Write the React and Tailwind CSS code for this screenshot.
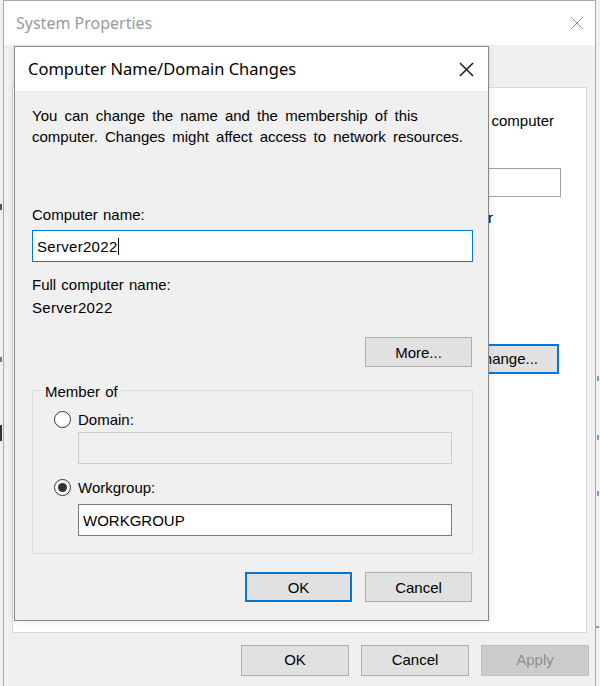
import React from "react";

const XIcon = ({ size, color, stroke }) => (
  <svg width={size} height={size} viewBox="0 0 16 16" fill="none">
    <path d="M1 1L15 15M15 1L1 15" stroke={color} strokeWidth={stroke} />
  </svg>
);

const Button = ({ children, def, disabled, w = "w-[107px]", h = "h-[30px]" }) => (
  <div
    className={`${w} ${h} flex items-center justify-center text-[15px] ${
      def
        ? "border-2 border-[#0078d7] bg-[#e1e1e1] text-black"
        : disabled
        ? "border border-[#bfbfbf] bg-[#cccccc] text-[#8f8f8f]"
        : "border border-[#adadad] bg-[#e1e1e1] text-black"
    }`}
  >
    {children}
  </div>
);

const Radio = ({ checked }) => (
  <div className="w-[17px] h-[17px] rounded-full border border-[#333333] bg-white flex items-center justify-center shrink-0">
    {checked && <div className="w-[9px] h-[9px] rounded-full bg-[#333333]" />}
  </div>
);

export default function App() {
  return (
    <div className="w-[600px] h-[686px] overflow-hidden flex bg-[#f0f0f0] font-['Liberation_Sans',Arial,sans-serif] text-black [word-spacing:1px]">
      {/* left background strip */}
      <div className="w-[3px] h-full flex flex-col bg-[#f0f0f0] overflow-hidden">
        <div className="h-[204px]" />
        <div className="h-[6px] w-[2px] bg-[#555]" />
        <div className="h-[147px]" />
        <div className="h-[5px] w-[2px] bg-[#777]" />
        <div className="h-[63px]" />
        <div className="h-[16px] w-[2px] bg-[#333]" />
      </div>

      {/* outer window */}
      <div className="relative w-[593px] h-full border-l border-r border-t border-[#a8a8a8] flex flex-col bg-[#f0f0f0]">
        <div className="h-[44px] bg-white flex items-center justify-between pl-[12px] pr-[11px]">
          <span className="text-[16px] text-[#9a9a9a] font-['Noto_Sans',sans-serif] [word-spacing:0px]">System Properties</span>
          <XIcon size={14} color="#8f8f8f" stroke={1.1} />
        </div>

        {/* tab panel */}
        <div className="ml-[8px] mt-[42px] w-[575px] h-[546px] border border-[#d9d9d9] bg-white flex flex-col items-end overflow-hidden text-[15px]">
          <div className="pt-[22px] pr-[32px] leading-[21px] whitespace-nowrap">
            your computer
          </div>
          <div className="mt-[37px] mr-[25px] w-[320px] h-[29px] border border-[#a0a0a0] bg-white" />
          <div className="mt-[10px] pr-[93px] leading-[21px] whitespace-nowrap">
            Server
          </div>
          <div className="mt-[116px] mr-[27px] w-[107px] h-[30px] border-2 border-[#0078d7] bg-[#e1e1e1] flex items-center justify-center text-[15px]">
            Change...
          </div>
        </div>

        {/* bottom buttons */}
        <div className="mt-[12px] flex justify-end gap-[12px] pr-[6px]">
          <Button w="w-[108px]" h="h-[31px]">OK</Button>
          <Button w="w-[108px]" h="h-[31px]">Cancel</Button>
          <Button w="w-[108px]" h="h-[31px]" disabled>Apply</Button>
        </div>

        {/* dialog overlay */}
        <div className="absolute left-[10px] top-[45px] w-[475px] h-[575px] border border-[#888888] bg-[#f0f0f0] flex flex-col shadow-[0_0_6px_rgba(0,0,0,0.12)]">
          <div className="h-[44px] bg-white flex items-center justify-between pl-[13px] pr-[14px]">
            <span className="text-[16.5px] font-['Noto_Sans',sans-serif] [word-spacing:0px]">Computer Name/Domain Changes</span>
            <XIcon size={15} color="#1a1a1a" stroke={1.6} />
          </div>

          <div className="flex flex-col pl-[17px] pr-[15px] pt-[14px] text-[15px] leading-[21px]">
            <p className="[word-spacing:3px]">
              You can change the name and the membership of this
              <br />
              computer. Changes might affect access to network resources.
            </p>

            <div className="mt-[57px]">Computer name:</div>
            <div className="mt-[5px] h-[32px] border border-[#0078d7] bg-white flex items-center pl-[4px]">
              <span className="tracking-[0.3px]">Server2022</span>
              <span className="w-px h-[17px] bg-black" />
            </div>

            <div className="mt-[12px]">Full computer name:</div>
            <div className="mt-[2px] tracking-[0.3px]">Server2022</div>

            <div className="mt-[19px] self-end mr-[1px]">
              <Button>More...</Button>
            </div>

            {/* group box */}
            <div className="mt-[23px] h-[164px] border border-[#dcdcdc] flex flex-col">
              <span className="-mt-[10px] ml-[9px] px-[3px] w-fit bg-[#f0f0f0]">Member of</span>

              <div className="mt-[7px] flex items-center gap-[7px] pl-[21px]">
                <Radio />
                <span>Domain:</span>
              </div>
              <div className="mt-[2px] ml-[45px] mr-[20px] h-[32px] border border-[#cccccc] bg-[#f0f0f0]" />

              <div className="mt-[13px] flex items-center gap-[7px] pl-[21px]">
                <Radio checked />
                <span>Workgroup:</span>
              </div>
              <div className="mt-[6px] ml-[45px] mr-[20px] h-[32px] border border-[#7a7a7a] bg-white flex items-center pl-[4px]">
                WORKGROUP
              </div>
            </div>

            <div className="mt-[18px] flex justify-end gap-[13px] mr-[1px]">
              <Button def>OK</Button>
              <Button>Cancel</Button>
            </div>
          </div>
        </div>
      </div>

      {/* right background strip */}
      <div className="w-[4px] h-full flex flex-col overflow-hidden">
        <div className="h-[376px]" />
        <div className="h-[5px] w-[2px] ml-[1px] bg-[#6f9fd0]" />
        <div className="h-[54px]" />
        <div className="h-[5px] w-[2px] ml-[1px] bg-[#6f9fd0]" />
        <div className="h-[51px]" />
        <div className="h-[5px] w-[2px] ml-[1px] bg-[#6f9fd0]" />
        <div className="h-[130px]" />
        <div className="h-[2px] w-[3px] bg-[#999]" />
      </div>
    </div>
  );
}
